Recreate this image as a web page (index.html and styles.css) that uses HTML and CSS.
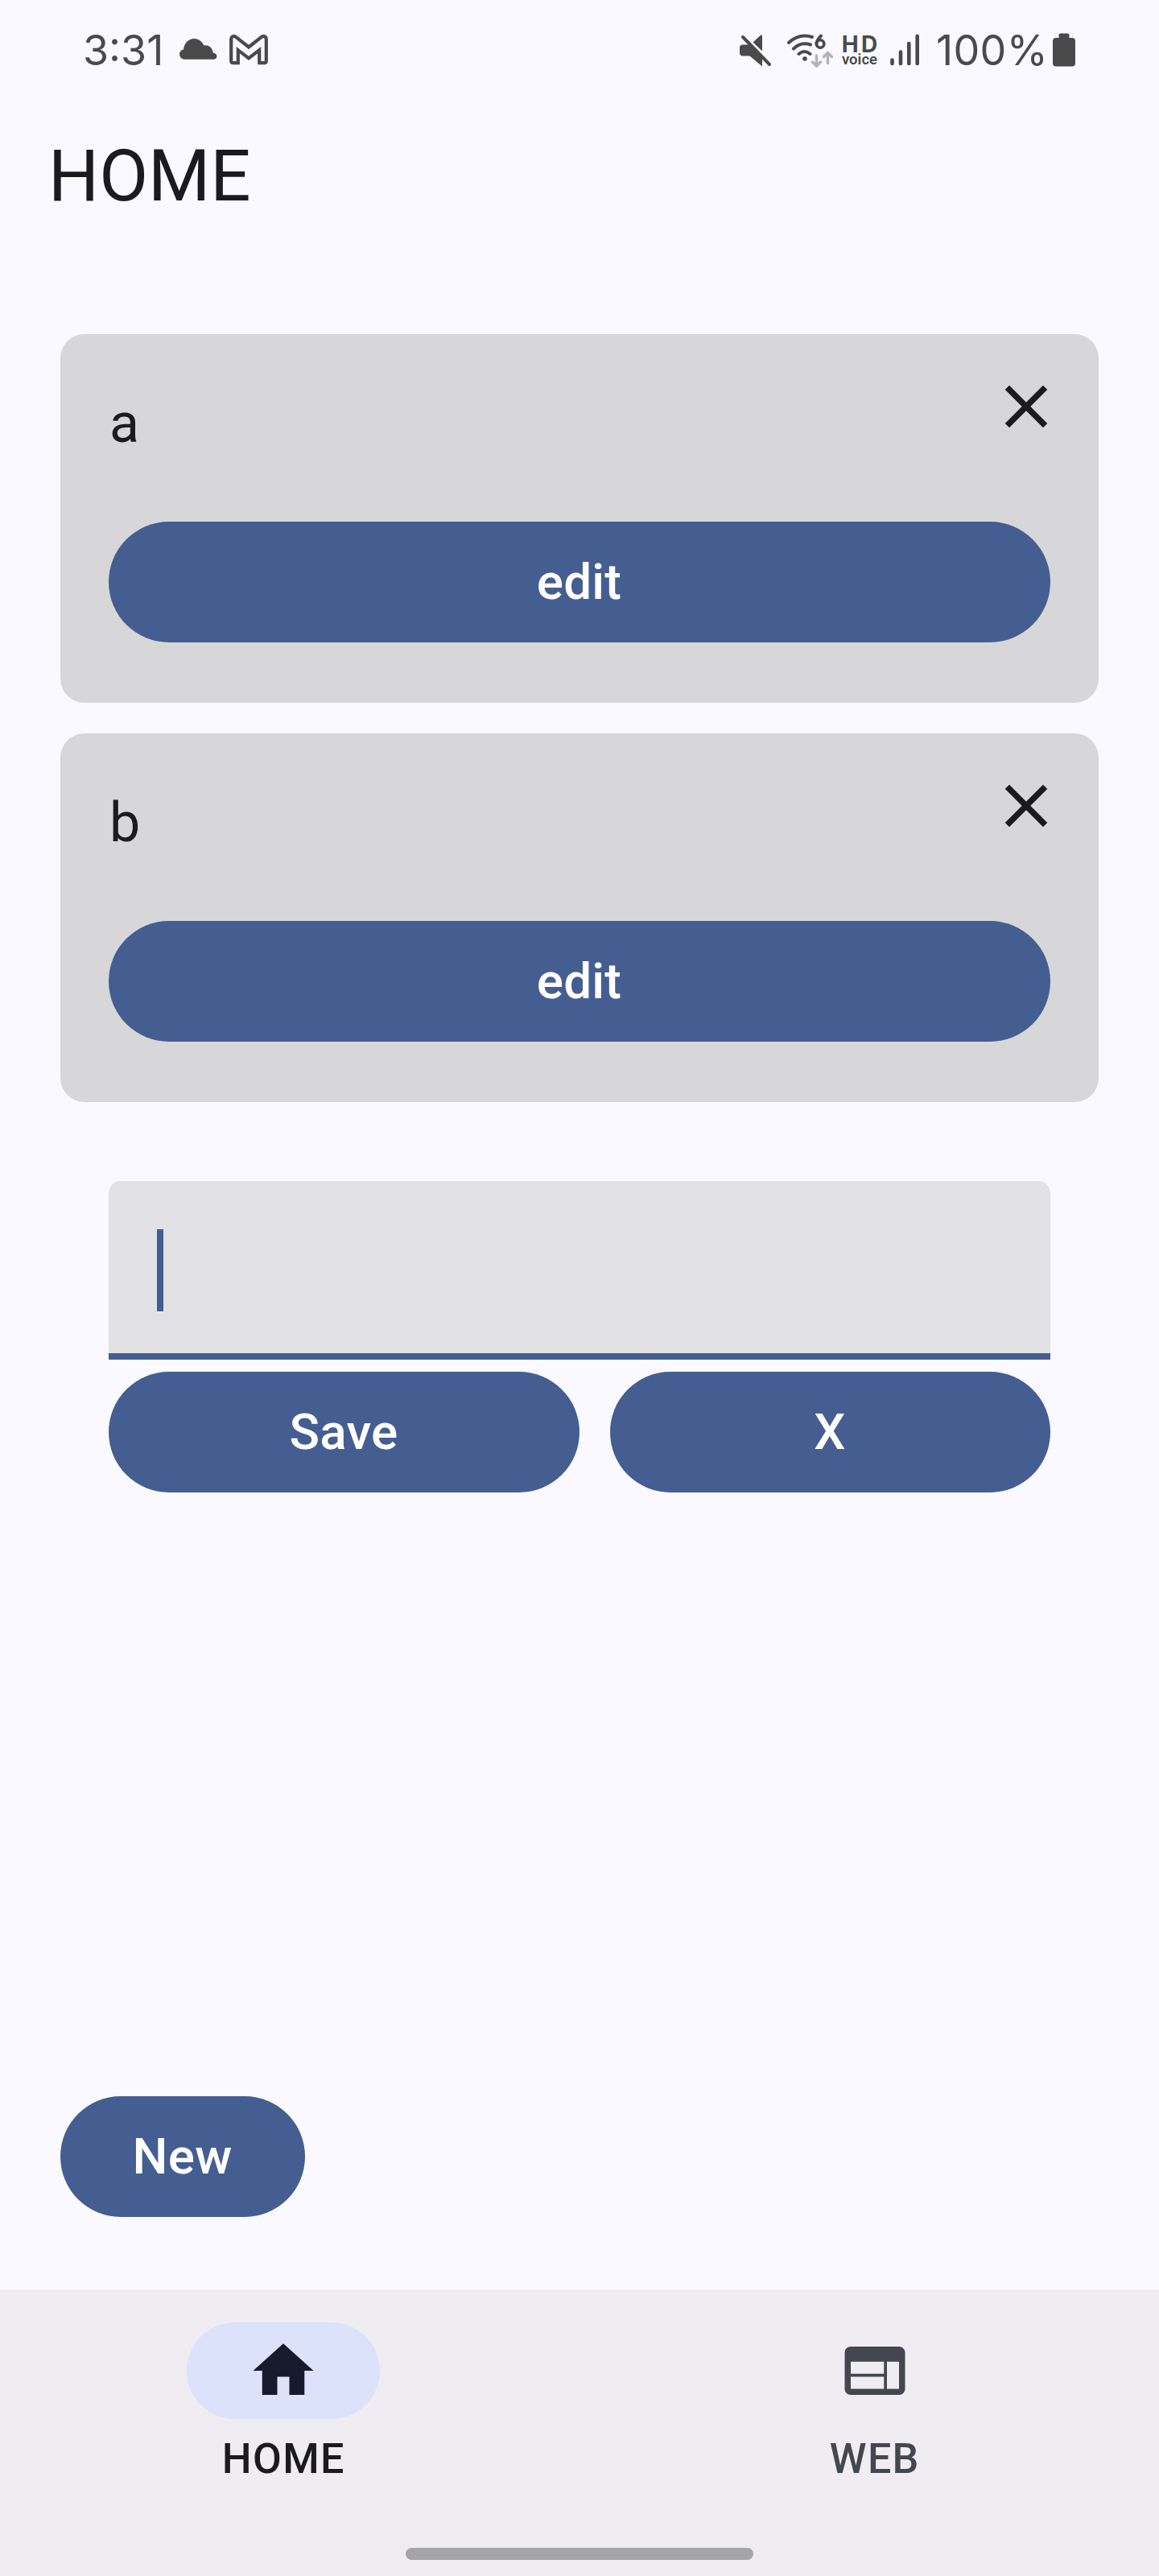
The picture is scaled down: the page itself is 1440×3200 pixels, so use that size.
FILE: index.html
```html
<!DOCTYPE html>
<html lang="en">
<head>
<meta charset="utf-8">
<title>Home</title>
<link rel="stylesheet" href="styles.css">
</head>
<body>
<div class="screen">
  <header class="status">
    <div class="status-left">
      <span class="clock">3:31</span>
      <svg class="cloud" viewBox="0 0 48 26" width="48" height="26"><path d="M7 25.700a6.300 6.300 0 0 1-.8-12.500C6.500 5.800 12.500 0 19.500 0c5.200 0 10 3.700 11.800 8.500 5-1 10.500 2 11.400 8.900 3 .4 4.700 2 4.700 4.300 0 2.500-1.900 4-4.400 4z" fill="#4a4a4a"/></svg>
      <svg class="mail" viewBox="0 0 48 38" width="48" height="38"><path d="M4 2.300 Q6 1.300 8 2.900L24 15.500 40 2.900Q42 1.300 44 2.300Q45.800 3.300 45.800 6V32.500Q45.800 35.200 43.300 35.200H37.200V19.200L24 29.400 10.800 19.200V35.200H4.700Q2.200 35.200 2.200 32.500V6Q2.200 3.300 4 2.300Z" fill="none" stroke="#4a4a4a" stroke-width="4.200"/></svg>
    </div>
    <div class="status-right">
      <svg class="mute" viewBox="0 0 40 40" width="40" height="40"><path d="M4 12.500h8L28 29v10.500L12.500 26.500H4q-4 0-4-4v-6q0-4 4-4zM16.500 9.500 26 .700q2-1.500 2 1V20.500z" fill="#4a4a4a"/><path d="M4 3 37 37" stroke="#4a4a4a" stroke-width="4" stroke-linecap="round"/></svg>
      <svg class="wifi" viewBox="0 0 57 42" width="57" height="42"><g fill="none" stroke="#4a4a4a" stroke-width="4" stroke-linecap="round"><path d="M2 11Q15-1 31 4M8 18.500Q17 9.500 29 13.500M14.500 25Q21.500 19 28.500 25M42 2.500Q37 8 36.300 12"/><circle cx="41.200" cy="12.500" r="4.700" stroke-width="3.600"/></g><circle cx="22" cy="31" r="2.800" fill="#4a4a4a"/><g fill="none" stroke="#b3b3b5" stroke-width="3.400" stroke-linecap="round" stroke-linejoin="round"><path d="M36.500 27v12.500M31.500 35l5 5 5-5M50.500 36.500V24.500M45.500 28.500l5-5 5 5"/></g></svg>
      <div class="hd"><span class="hd-top">HD</span><span class="hd-sub">voice</span></div>
      <svg class="bars" viewBox="0 0 37 40" width="37" height="40"><path d="M2.500 32.500v4.500M13 22.500V37M23.300 12V37M33.700 2.800V37" stroke="#4a4a4a" stroke-width="4.600" stroke-linecap="round"/></svg>
      <span class="percent">100%</span>
      <svg class="battery" viewBox="0 0 28 42" width="28" height="42"><path d="M9.500.500h9q2 0 2 2V6H24q4 0 4 4v27.500q0 4-4 4H4q-4 0-4-4V10q0-4 4-4h3.500V2.500q0-2 2-2z" fill="#4a4a4a"/></svg>
    </div>
  </header>

  <h1 class="title">HOME</h1>

  <main class="content">
    <section class="card">
      <div class="card-head">
        <span class="card-text">a</span>
        <svg class="close" viewBox="0 0 24 24" width="90" height="90"><path d="M19 6.410 17.590 5 12 10.590 6.410 5 5 6.410 10.590 12 5 17.590 6.410 19 12 13.410 17.590 19 19 17.590 13.410 12z" fill="#1b1b1f"/></svg>
      </div>
      <button class="btn">edit</button>
    </section>
    <section class="card">
      <div class="card-head">
        <span class="card-text">b</span>
        <svg class="close" viewBox="0 0 24 24" width="90" height="90"><path d="M19 6.410 17.590 5 12 10.590 6.410 5 5 6.410 10.590 12 5 17.590 6.410 19 12 13.410 17.590 19 19 17.590 13.410 12z" fill="#1b1b1f"/></svg>
      </div>
      <button class="btn">edit</button>
    </section>

    <section class="editor">
      <div class="field"><span class="caret"></span></div>
      <div class="actions">
        <button class="btn save">Save</button>
        <button class="btn cancel">X</button>
      </div>
    </section>

    <button class="btn new">New</button>
  </main>

  <nav class="nav">
    <div class="tabs">
      <div class="tab active">
        <span class="pill"><svg viewBox="0 0 24 24" width="90" height="90"><path d="M10 20v-6h4v6h5v-8h3L12 3 2 12h3v8z" fill="currentColor"/></svg></span>
        <span class="label">HOME</span>
      </div>
      <div class="tab">
        <span class="pill"><svg viewBox="0 0 24 24" width="90" height="90"><path d="M20 4H4c-1.100 0-1.990.900-1.990 2L2 18c0 1.100.900 2 2 2h16c1.100 0 2-.900 2-2V6c0-1.100-.900-2-2-2zm-5 14H4v-4h11v4zm0-5H4V9h11v4zm5 5h-4V9h4v9z" fill="currentColor"/></svg></span>
        <span class="label">WEB</span>
      </div>
    </div>
    <div class="handle"></div>
  </nav>
</div>
</body>
</html>
```
FILE: styles.css
```css
* { box-sizing: border-box; }

body {
  margin: 0;
  background: #faf9ff;
  color: #1b1b1f;
  font-family: Roboto, "Liberation Sans", sans-serif;
}

svg { display: block; flex: none; }

.screen {
  display: flex;
  flex-direction: column;
  width: 1440px;
  height: 3200px;
}

/* Status bar */
.status {
  display: flex;
  justify-content: space-between;
  height: 124px;
  padding: 0 104px 0 103px;
  color: #4a4a4a;
}
.status-left, .status-right { display: flex; align-items: flex-start; }
.clock, .percent {
  flex: none;
  margin-top: 31px;
  font: 400 52px/64px Inter, sans-serif;
  white-space: nowrap;
}
.clock { width: 119px; }
.cloud { margin-top: 48px; }
.mail { margin: 43px 0 0 15px; }
.mute { margin-top: 43px; }
.wifi { margin: 42px 0 0 19px; }
.hd {
  display: flex;
  flex-direction: column;
  align-items: center;
  width: 46px;
  margin: 44px 0 0 10px;
}
.hd-top { font: 700 28px/22px Inter, sans-serif; letter-spacing: 3.500px; margin-right: -3.500px; }
.hd-sub { font: 600 18.500px/16px Roboto, sans-serif; }
.bars { margin: 42px 0 0 15px; }
.percent { width: 145px; margin-left: 20px; letter-spacing: 0.300px; }
.battery { margin-top: 41px; }

.title {
  height: 291px;
  margin: 0;
  padding: 43px 60px 0;
  font-size: 88.500px;
  line-height: 105px;
  font-weight: 400;
}

/* Content */
.content {
  display: flex;
  flex-direction: column;
  flex: 1;
  padding: 0 75px 90px;
}
.card {
  height: 458px;
  margin-bottom: 38px;
  padding: 45px 60px 75px;
  border-radius: 30px;
  background: #d7d7d9;
}
.card-head {
  display: flex;
  justify-content: space-between;
  height: 188px;
}
.card-text {
  padding: 24px 0 0 1px;
  font-size: 68px;
  line-height: 84px;
}
.close { margin-right: -15px; }

.btn {
  display: block;
  width: 100%;
  height: 150px;
  padding: 0 1px 0 0;
  border: 0;
  border-radius: 75px;
  background: #455e91;
  color: #fff;
  font: 500 62px/150px Roboto, "Liberation Sans", sans-serif;
  letter-spacing: 0.200px;
}

.editor { padding: 60px 60px 0; }
.field {
  height: 222px;
  padding: 60px;
  border-bottom: 8px solid #455e91;
  border-radius: 15px 15px 0 0;
  background: #e2e2e6;
}
.caret {
  display: block;
  width: 7.500px;
  height: 102px;
  background: #455e91;
}
.actions { display: flex; gap: 38px; margin-top: 15px; }
.save { width: 585px; }
.cancel { flex: 1; }
.new { width: 304px; margin-top: auto; }

/* Bottom navigation */
.nav {
  display: flex;
  flex-direction: column;
  align-items: center;
  height: 356px;
  background: #efedf1;
}
.tabs {
  display: flex;
  gap: 30px;
  width: 100%;
  height: 321px;
  padding: 41px 1px 0 0;
}
.tab {
  display: flex;
  flex-direction: column;
  align-items: center;
  flex: 1;
  color: #44474f;
}
.pill {
  display: flex;
  align-items: center;
  justify-content: center;
  width: 240px;
  height: 120px;
  border-radius: 60px;
}
.active .pill { background: #dce2f9; color: #151b2c; }
.active .label { color: #1b1b1f; }
.label {
  margin-top: 16px;
  font-size: 52px;
  line-height: 67px;
  font-weight: 500;
  letter-spacing: 1.300px;
}
.handle { width: 432px; height: 15px; border-radius: 8px; background: #a5a5a7; }
```
